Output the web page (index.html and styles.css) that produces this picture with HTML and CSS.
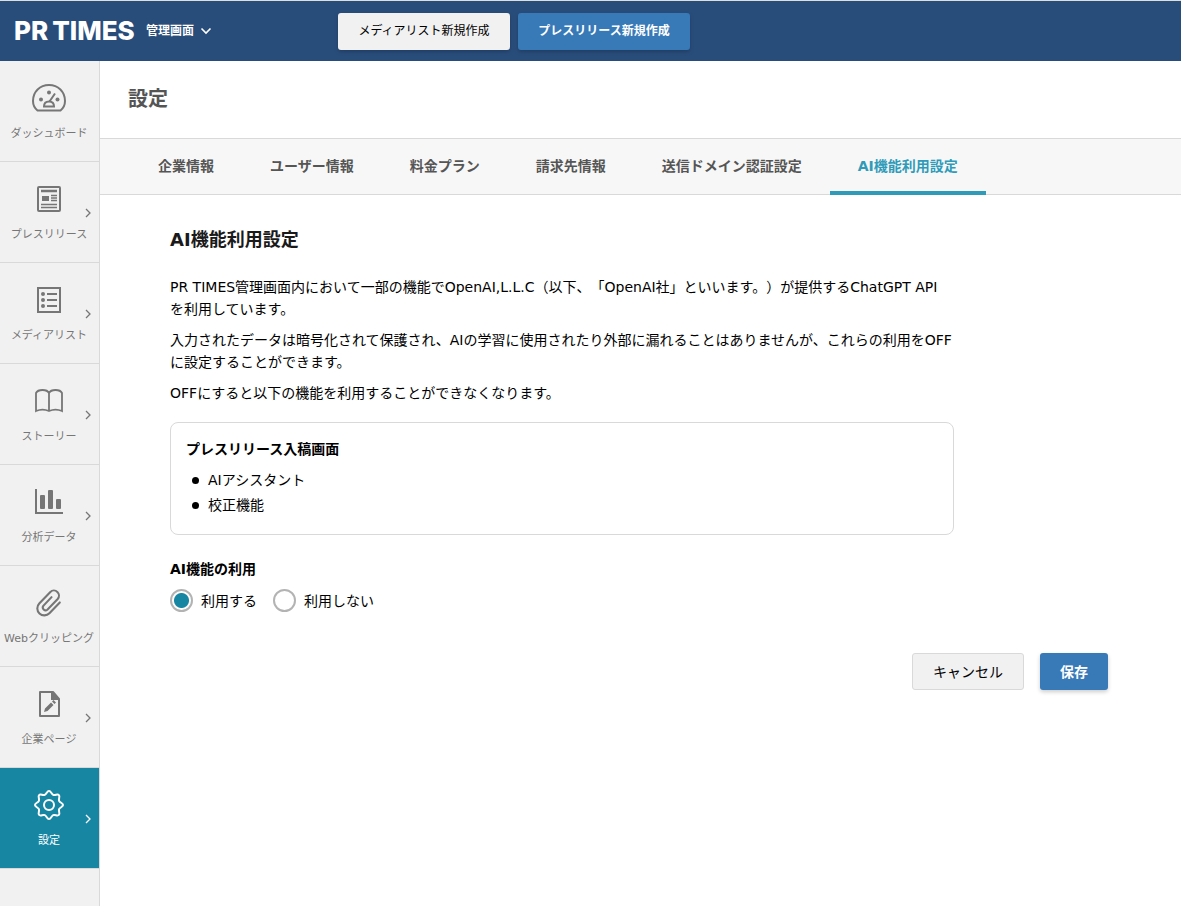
FILE: index.html
```html
<!DOCTYPE html>
<html lang="ja">
<head>
<meta charset="utf-8">
<title>AI機能利用設定</title>
<link rel="stylesheet" href="styles.css">
</head>
<body>
<header class="header">
  <a class="logo" href="#"><span>PR</span><span>TIMES</span></a>
  <button class="switcher" type="button">管理画面
    <svg width="12" height="8" viewBox="0 0 12 8" fill="none" stroke="currentColor" stroke-width="1.6"><path d="M1.5 1.5 6 6l4.500-4.500"/></svg>
  </button>
  <div class="header-actions">
    <button class="btn btn-head" type="button">メディアリスト新規作成</button>
    <button class="btn btn-head btn-primary" type="button">プレスリリース新規作成</button>
  </div>
</header>
<div class="layout">
  <nav class="sidebar">
    <a class="side-item" href="#">
      <svg class="side-icon" viewBox="0 0 36 36" fill="none" stroke="currentColor" stroke-width="2"><path d="M6.500 30.500C3.500 28 2 24.500 2 21 2 11.500 9 5 18 5s16 6.500 16 16c0 3.500-1.500 7-4.500 9.500z"/><path d="M13 26.500c0-3 2-5 5-5s5 2 5 5zM18.500 21.500 24 13.500"/><g fill="currentColor" stroke="none"><circle cx="10" cy="19.500" r="2"/><circle cx="18" cy="12.500" r="2"/><circle cx="26.500" cy="19.500" r="2"/></g></svg>
      <span>ダッシュボード</span>
    </a>
    <a class="side-item" href="#">
      <svg class="side-icon" viewBox="0 0 36 36" fill="none" stroke="currentColor" stroke-width="2"><rect x="7" y="6" width="22" height="24" rx="1"/><path d="M10 10h16" stroke-width="2.500"/><path d="M20 14.500h6M20 17h6M20 19.500h6M10 23.500h16M10 26.500h16" stroke-width="1.500"/><path d="M11 15h7v5h-7z" fill="currentColor" stroke="none"/></svg>
      <span>プレスリリース</span>
      <svg class="side-arrow" viewBox="0 0 6 10" fill="none" stroke="currentColor" stroke-width="1.300"><path d="m1 1 4 4-4 4"/></svg>
    </a>
    <a class="side-item" href="#">
      <svg class="side-icon" viewBox="0 0 36 36" fill="none" stroke="currentColor" stroke-width="2"><rect x="7" y="6" width="22" height="24"/><path d="M16 12h10M16 18h10M16 24h10"/><g fill="currentColor" stroke="none"><circle cx="12" cy="12" r="2"/><circle cx="12" cy="18" r="2"/><circle cx="12" cy="24" r="2"/></g></svg>
      <span>メディアリスト</span>
      <svg class="side-arrow" viewBox="0 0 6 10" fill="none" stroke="currentColor" stroke-width="1.300"><path d="m1 1 4 4-4 4"/></svg>
    </a>
    <a class="side-item" href="#">
      <svg class="side-icon" viewBox="0 0 36 36" fill="none" stroke="currentColor" stroke-width="1.800"><path d="M18 10v18M18 10c-1-2-3.500-3-6.500-3S6 8 5 10v18c4-1.800 9-1.800 13 0 4-1.800 9-1.800 13 0V10c-1-2-3.500-3-6.500-3S19 8 18 10z"/></svg>
      <span>ストーリー</span>
      <svg class="side-arrow" viewBox="0 0 6 10" fill="none" stroke="currentColor" stroke-width="1.300"><path d="m1 1 4 4-4 4"/></svg>
    </a>
    <a class="side-item" href="#">
      <svg class="side-icon" viewBox="0 0 36 36" fill="none" stroke="currentColor" stroke-width="2"><path d="M5 5v24h27"/><g fill="currentColor" stroke="none"><rect x="9" y="11" width="5" height="14" rx="1"/><rect x="17" y="6" width="5" height="19" rx="1"/><rect x="25" y="15" width="5" height="10" rx="1"/></g></svg>
      <span>分析データ</span>
      <svg class="side-arrow" viewBox="0 0 6 10" fill="none" stroke="currentColor" stroke-width="1.300"><path d="m1 1 4 4-4 4"/></svg>
    </a>
    <a class="side-item" href="#">
      <svg class="side-icon" viewBox="0 0 24 24" fill="none" stroke="currentColor" stroke-width="1.400" stroke-linecap="round"><path d="m19.200 11.600-6.900 7.200a4.700 4.700 0 0 1-6.800-6.500l7.400-7.700a3.400 3.400 0 0 1 4.900 4.700l-6.900 7.200a1.900 1.900 0 0 1-2.700-2.600l5.500-5.800"/></svg>
      <span>Webクリッピング</span>
    </a>
    <a class="side-item" href="#">
      <svg class="side-icon" viewBox="0 0 36 36" fill="none" stroke="currentColor" stroke-width="2" stroke-linejoin="round"><path d="M9 6h13l6 7v17H9z"/><path d="M20 5v9h9z" fill="currentColor" stroke="none"/><path d="m13 26 1-3.500 6-6 2.500 2.500-6 6zM21 15.500l1.500-1.500 2.500 2.500-1.500 1.500z" fill="currentColor" stroke="none"/></svg>
      <span>企業ページ</span>
      <svg class="side-arrow" viewBox="0 0 6 10" fill="none" stroke="currentColor" stroke-width="1.300"><path d="m1 1 4 4-4 4"/></svg>
    </a>
    <a class="side-item side-item-active" href="#" aria-current="page">
      <svg class="side-icon" viewBox="0 0 36 36" fill="none" stroke="currentColor" stroke-width="2" stroke-linejoin="round"><circle cx="18" cy="18" r="5"/><path d="M18 4c2 0 2.200 3 4.200 3.900S26.400 6.600 27.900 8.100s-.7 3.700.2 5.700S32 16 32 18s-3 2.200-3.900 4.200 1.300 4.200-.2 5.700-3.700-.7-5.700.2S20 32 18 32s-2.200-3-4.200-3.900-4.200 1.300-5.700-.2.700-3.700-.2-5.700S4 20 4 18s3-2.200 3.900-4.200-1.300-4.200.2-5.700 3.700.7 5.700-.2S16 4 18 4z"/></svg>
      <span>設定</span>
      <svg class="side-arrow" viewBox="0 0 6 10" fill="none" stroke="currentColor" stroke-width="1.300"><path d="m1 1 4 4-4 4"/></svg>
    </a>
  </nav>
  <main class="main">
    <h1 class="page-title">設定</h1>
    <nav class="tabs">
      <a class="tab" href="#">企業情報</a>
      <a class="tab" href="#">ユーザー情報</a>
      <a class="tab" href="#">料金プラン</a>
      <a class="tab" href="#">請求先情報</a>
      <a class="tab" href="#">送信ドメイン認証設定</a>
      <a class="tab tab-active" href="#" aria-current="page">AI機能利用設定</a>
    </nav>
    <form class="content">
      <section class="panel">
        <h2 class="heading">AI機能利用設定</h2>
        <div class="lead">
          <p>PR TIMES管理画面内において一部の機能でOpenAI,L.L.C（以下、「OpenAI社」といいます。）が提供するChatGPT API<br>を利用しています。</p>
          <p>入力されたデータは暗号化されて保護され、AIの学習に使用されたり外部に漏れることはありませんが、これらの利用をOFFに設定することができます。</p>
          <p>OFFにすると以下の機能を利用することができなくなります。</p>
        </div>
        <div class="box">
          <h3 class="subheading">プレスリリース入稿画面</h3>
          <ul class="features">
            <li class="feature">AIアシスタント</li>
            <li class="feature">校正機能</li>
          </ul>
        </div>
        <fieldset class="choice">
          <legend class="subheading">AI機能の利用</legend>
          <div class="options">
            <label class="option"><input class="radio" type="radio" name="ai" checked>利用する</label>
            <label class="option"><input class="radio" type="radio" name="ai">利用しない</label>
          </div>
        </fieldset>
      </section>
      <div class="form-actions">
        <button class="btn btn-cancel" type="button">キャンセル</button>
        <button class="btn btn-primary" type="submit">保存</button>
      </div>
    </form>
  </main>
</div>
</body>
</html>
```

FILE: styles.css
```css
* { box-sizing: border-box; }

body {
  margin: 0;
  min-height: 100vh;
  display: flex;
  flex-direction: column;
  font: 14px/22px "DejaVu Sans", "Noto Sans CJK JP", sans-serif;
  color: #000;
  background: #fff;
  text-spacing-trim: space-all;
}

h1, h2, h3, p, ul, fieldset, legend { margin: 0; padding: 0; }
a { color: inherit; text-decoration: none; }
button { font-family: inherit; cursor: pointer; }

.header {
  display: flex;
  align-items: center;
  height: 61px;
  padding-left: 14px;
  border-top: 1px solid #dcdfdc;
  background: #294d7b;
  color: #fff;
}

.logo {
  display: flex;
  gap: 4px;
  width: 132px;
  font: 800 26px/32px Inter, sans-serif;
}

.switcher {
  display: flex;
  align-items: center;
  gap: 6px;
  width: 192px;
  padding: 0;
  border: 0;
  background: none;
  color: inherit;
  font-size: 12px;
  font-weight: bold;
  line-height: 20px;
}

.header-actions { display: flex; gap: 8px; }

.btn {
  height: 37px;
  padding: 0 19px;
  border: 1px solid transparent;
  border-radius: 3px;
  background: #f1f1f1;
  color: #000;
  font-size: 14px;
  line-height: 20px;
  white-space: nowrap;
}

.btn-head {
  min-width: 172px;
  font-size: 12px;
  box-shadow: 0 2px 4px rgba(0, 0, 0, .2);
}

.btn-primary {
  background: #3879b7;
  color: #fff;
  font-weight: bold;
  box-shadow: 0 2px 4px rgba(0, 0, 0, .2);
}

.btn-cancel { min-width: 112px; border-color: #d9d9d9; }

.layout { display: flex; flex: 1; }

.sidebar {
  flex: 0 0 100px;
  border-right: 1px solid #d9d9d9;
  background: #f1f1f1;
  color: #767676;
}

.side-item {
  position: relative;
  display: flex;
  flex-direction: column;
  align-items: center;
  gap: 8px;
  height: 101px;
  padding: 19px 1px 0 0;
  border-bottom: 1px solid #d9d9d9;
  font-size: 11px;
  line-height: 20px;
  white-space: nowrap;
}

.side-item-active { background: #1786a3; color: #fff; }
.side-icon { width: 36px; height: 36px; }

.side-arrow {
  position: absolute;
  right: 8px;
  top: 46px;
  width: 6px;
  height: 10px;
}

.main { flex: 1; min-width: 0; }

.page-title {
  padding: 22px 28px 23px;
  color: #555;
  font-size: 20px;
  line-height: 32px;
}

.tabs {
  display: flex;
  height: 57px;
  padding-left: 30px;
  border: solid #d9d9d9;
  border-width: 1px 0;
  background: #f7f7f7;
  color: #555;
}

.tab {
  height: 56px;
  padding: 16px 28px;
  font-weight: bold;
  white-space: nowrap;
}

.tab-active { border-bottom: 4px solid #2f9bb9; color: #2f9bb9; }

.content {
  max-width: 938px;
  margin-left: 70px;
  padding: 33px 0;
}

.panel { max-width: 784px; }

.heading {
  margin-bottom: 24px;
  color: #1a1a1a;
  font-size: 18px;
  line-height: 24px;
}

.lead { display: grid; gap: 9px; }

.box {
  margin: 18px 0 23px;
  padding: 15px 15px 18px;
  border: 1px solid #d9d9d9;
  border-radius: 8px;
}

.subheading { font-size: 14px; font-weight: bold; line-height: 22px; }

.features {
  display: grid;
  gap: 3px;
  padding: 9px 0 0 6px;
  list-style: none;
}

.feature { display: flex; align-items: center; gap: 9px; }

.feature::before {
  content: "";
  width: 7px;
  height: 7px;
  border-radius: 50%;
  background: #000;
}

.choice { border: 0; }

.options { display: flex; gap: 16px; padding-top: 9px; }
.option { display: flex; align-items: center; gap: 8px; }

.radio {
  appearance: none;
  width: 23px;
  height: 23px;
  margin: 0;
  border: 2px solid #b3b3b3;
  border-radius: 50%;
  background: #fff;
}

.radio:checked { background: radial-gradient(circle, #1786a3 7px, #fff 8px); }

.form-actions {
  display: flex;
  justify-content: flex-end;
  gap: 16px;
  padding-top: 41px;
}
```
